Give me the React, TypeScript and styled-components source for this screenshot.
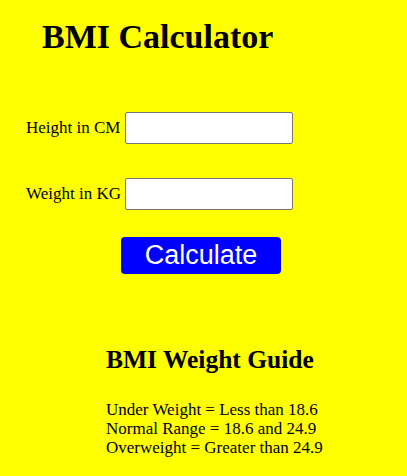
import styled, { createGlobalStyle } from "styled-components"

const GlobalStyle = createGlobalStyle`
  html, body {
    margin: 0;
    padding: 0;
    background: #ffff00;
  }
  body {
    font-family: "Liberation Serif", "Times New Roman", serif;
    color: #000;
  }
`

const App = () => {
  return (
    <Page>
      <GlobalStyle />
      <Title>BMI Calculator</Title>
      <Form>
        <Row>
          <Label htmlFor="height">Height in CM</Label>
          <Input id="height" type="text" />
        </Row>
        <Row>
          <Label htmlFor="weight">Weight in KG</Label>
          <Input id="weight" type="text" />
        </Row>
        <Button type="button">Calculate</Button>
      </Form>
      <Guide>
        <GuideTitle>BMI Weight Guide</GuideTitle>
        <GuideList>
          <GuideLine>Under Weight = Less than 18.6</GuideLine>
          <GuideLine>Normal Range = 18.6 and 24.9</GuideLine>
          <GuideLine>Overweight = Greater than 24.9</GuideLine>
        </GuideList>
      </Guide>
    </Page>
  )
}

const Page = styled.div`
  width: 407px;
  min-height: 476px;
  padding-top: 17px;
  box-sizing: border-box;
  background: #ffff00;
`

const Title = styled.h1`
  margin: 0 0 0 42px;
  font-size: 34px;
  line-height: 39px;
  font-weight: bold;
`

const Form = styled.div`
  display: flex;
  flex-direction: column;
  gap: 34px;
  margin-top: 56px;
  padding-left: 26px;
`

const Row = styled.div`
  display: flex;
  align-items: center;
  gap: 5px;
  height: 32px;
`

const Label = styled.label`
  width: 94px;
  text-align: right;
  white-space: nowrap;
  font-size: 17px;
`

const Input = styled.input`
  width: 168px;
  height: 32px;
  box-sizing: border-box;
  border: 1px solid #767676;
  border-radius: 2px;
  background: #fff;
  padding: 1px 2px;
  font-size: 16px;
`

const Button = styled.button`
  margin-top: -7px;
  margin-left: 95px;
  width: 160px;
  height: 37px;
  border: none;
  border-radius: 4px;
  background: #0000ff;
  color: #fff;
  font-family: "Liberation Sans", Arial, sans-serif;
  font-size: 27px;
  padding: 0;
`

const Guide = styled.div`
  margin-top: 72px;
  padding-left: 106px;
`

const GuideTitle = styled.h2`
  margin: 0;
  font-size: 25.5px;
  line-height: 28px;
  font-weight: bold;
`

const GuideList = styled.div`
  margin-top: 26px;
  font-size: 17px;
  line-height: 19px;
`

const GuideLine = styled.div``

export default App
